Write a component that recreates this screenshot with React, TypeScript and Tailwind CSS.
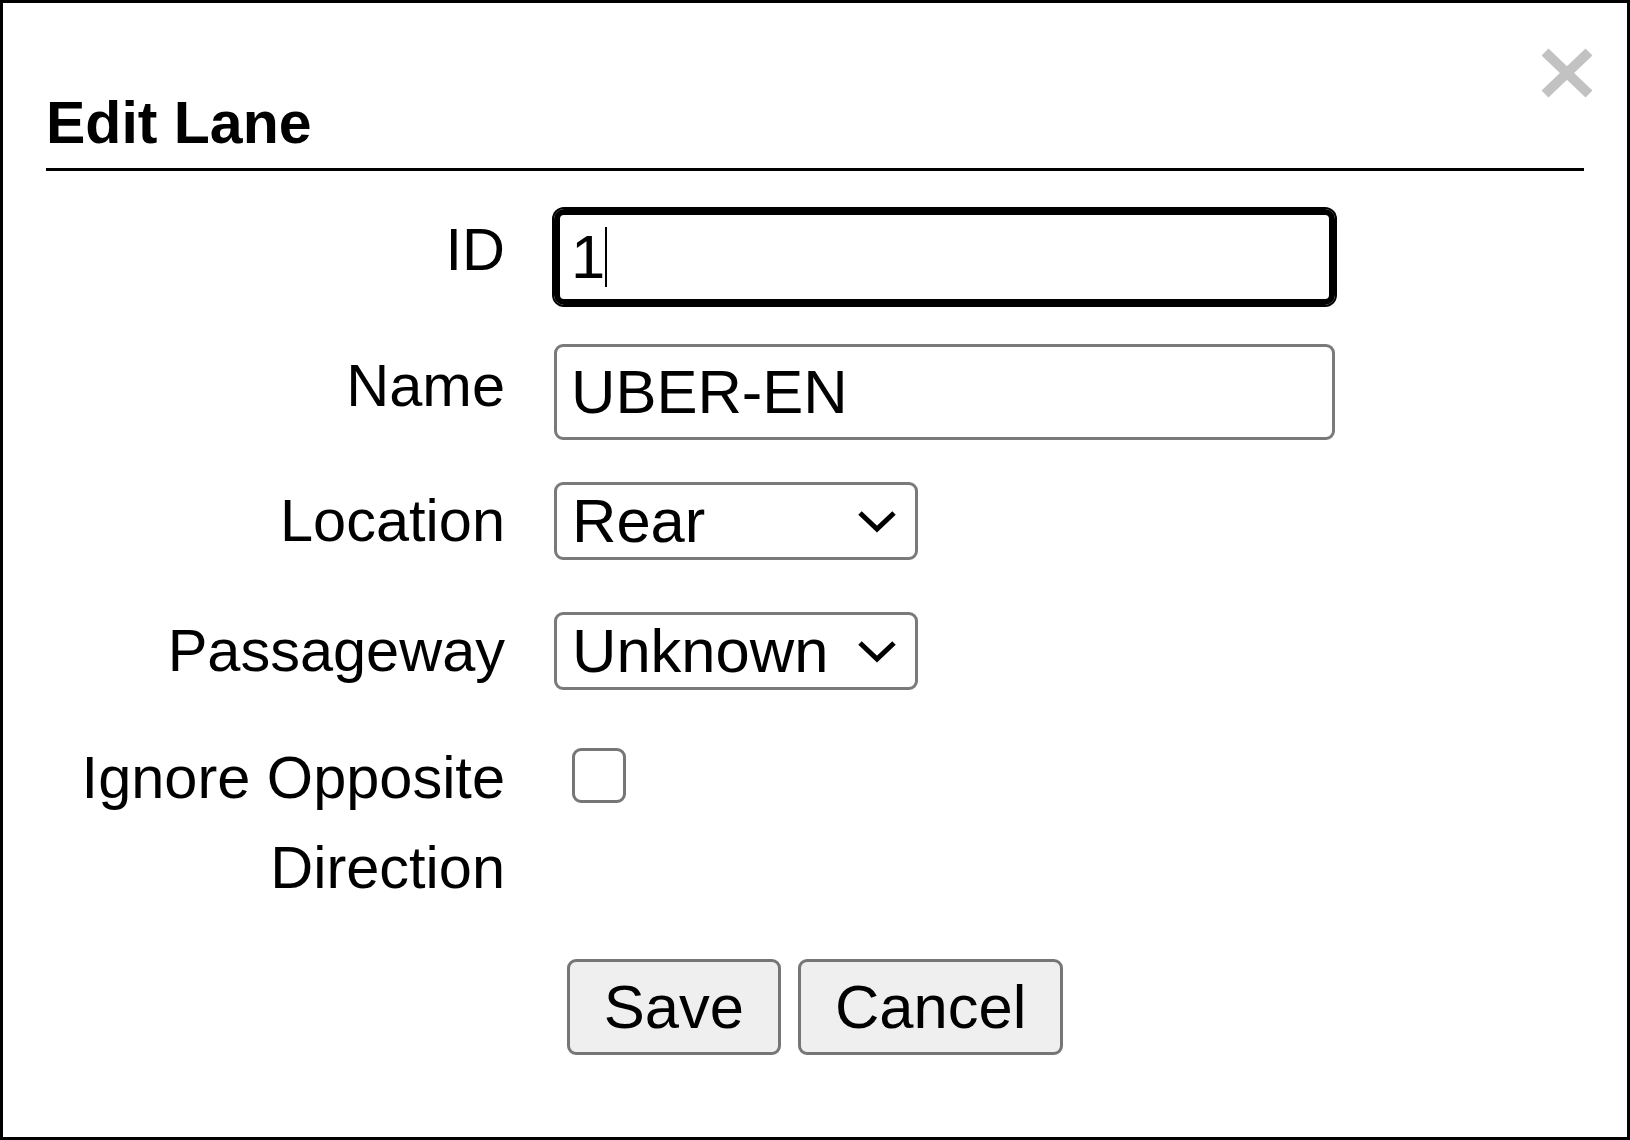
import React from 'react';

const labelCls = 'w-[459px] shrink-0 text-right leading-[90px]';

function Chevron() {
  return (
    <svg width="40" height="24" viewBox="0 0 40 24" fill="none" className="shrink-0">
      <polyline points="3,4 20,20 37,4" stroke="#000" strokeWidth="5" strokeLinejoin="miter" />
    </svg>
  );
}

function Select({value}: {value: string}) {
  return (
    <div className="mt-[6px] w-[364px] h-[78px] border-[3px] border-[#7a7a7a] rounded-[9px] bg-white flex items-center justify-between pl-[15px] pr-[18px] text-[61.5px] leading-none">
      <span>{value}</span>
      <Chevron />
    </div>
  );
}

export default function App() {
  return (
    <div className="relative w-[1630px] h-[1140px] border-[3px] border-black bg-white text-black font-['Liberation_Sans',Arial,sans-serif]">
      <button className="absolute left-[1538px] top-[45px] w-[52px] h-[50px] cursor-pointer" aria-label="Close">
        <svg width="52" height="50" viewBox="0 0 52 50">
          <line x1="4" y1="4" x2="48" y2="46" stroke="#c2c2c2" strokeWidth="10" />
          <line x1="48" y1="4" x2="4" y2="46" stroke="#c2c2c2" strokeWidth="10" />
        </svg>
      </button>

      <div className="px-[43px] pt-[86px]">
        <h1 className="text-[59px] font-bold leading-[68px] pb-[11px] border-b-[3px] border-black">Edit Lane</h1>

        <div className="text-[59.5px]">
          <div className="mt-[34px] flex items-start gap-[49px]">
            <label className={labelCls}>ID</label>
            <div className="mt-[4px] w-[781px] h-[96px] border-[6px] border-black rounded-[10px] shadow-[0_0_0_2px_#000] flex items-center pl-[11px] text-[61.5px] leading-none">
              <span>1</span>
              <span className="w-[2px] h-[60px] bg-black" />
            </div>
          </div>

          <div className="mt-[36px] flex items-start gap-[49px]">
            <label className={labelCls}>Name</label>
            <div className="mt-[3px] w-[781px] h-[96px] border-[3px] border-[#7a7a7a] rounded-[9px] flex items-center pl-[14px] text-[61.5px] leading-none">
              UBER-EN
            </div>
          </div>

          <div className="mt-[36px] flex items-start gap-[49px]">
            <label className={labelCls}>Location</label>
            <Select value="Rear" />
          </div>

          <div className="mt-[40px] flex items-start gap-[49px]">
            <label className={labelCls}>Passageway</label>
            <Select value="Unknown" />
          </div>

          <div className="mt-[37px] flex items-start gap-[49px]">
            <label className={labelCls}>Ignore Opposite Direction</label>
            <div className="mt-[15px] ml-[18px] w-[54px] h-[55px] border-[3px] border-[#767676] rounded-[9px] bg-white" />
          </div>

          <div className="mt-[46px] flex justify-center gap-[17px]">
            <button className="h-[96px] px-[34px] border-[3px] border-[#767676] rounded-[9px] bg-[#efefef] text-[61.5px] leading-none">Save</button>
            <button className="h-[96px] px-[34px] border-[3px] border-[#767676] rounded-[9px] bg-[#efefef] text-[61.5px] leading-none">Cancel</button>
          </div>
        </div>
      </div>
    </div>
  );
}
